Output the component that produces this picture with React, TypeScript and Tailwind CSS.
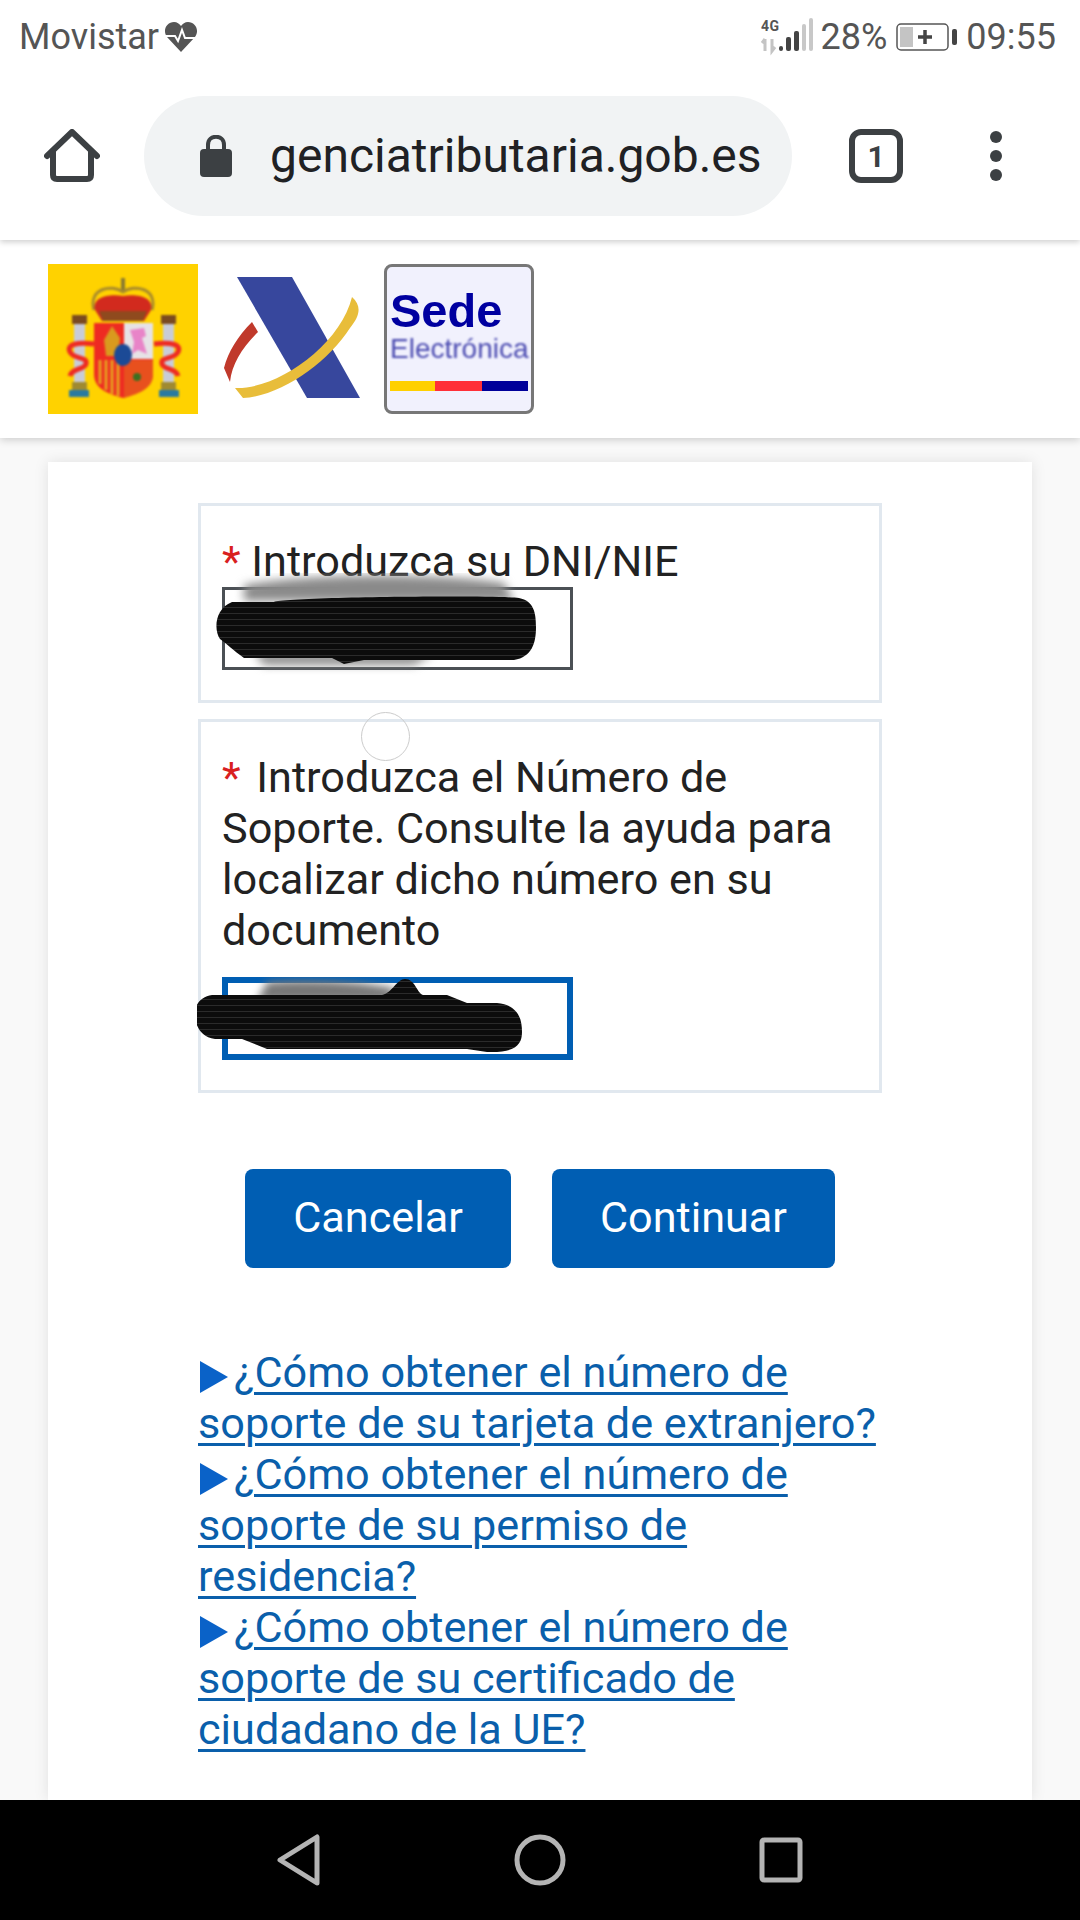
const links = [
  "¿Cómo obtener el número de soporte de su tarjeta de extranjero?",
  "¿Cómo obtener el número de soporte de su permiso de residencia?",
  "¿Cómo obtener el número de soporte de su certificado de ciudadano de la UE?",
];

function StatusBar() {
  return (
    <div className="relative z-30 flex h-[72px] items-center justify-between bg-white pl-[19px] pr-[24px] pt-[2px] text-[36px] text-[#555555]">
      <div className="flex items-center gap-[5px]">
        <span>Movistar</span>
        <svg width="34" height="32" viewBox="0 0 34 32">
          <path d="M17 31 L3 16 C-2 9 3 1 10 1 C13 1 15.500 3 17 5 C18.500 3 21 1 24 1 C31 1 36 9 31 16 Z" fill="#555555" />
          <path d="M1 15 H11 L14 20 L18 9 L21 17 H33" fill="none" stroke="#ffffff" strokeWidth="2" />
        </svg>
      </div>
      <div className="flex items-center">
        <svg width="56" height="40" viewBox="0 0 56 40" className="mr-[6px]">
          <text x="2" y="14" fontFamily="Roboto, sans-serif" fontWeight="700" fontSize="14" fill="#555555" textLength="18">4G</text>
          <path d="M6 22 V34 M3 26 L6 22 M13 22 V34 L16 30" fill="none" stroke="#c4c4c4" strokeWidth="3" />
          <rect x="20" y="29" width="4" height="5" rx="2" fill="#444444" />
          <rect x="27" y="20" width="5" height="14" rx="2" fill="#444444" />
          <rect x="35" y="14" width="5" height="20" rx="2" fill="#444444" />
          <rect x="43" y="7" width="4" height="27" rx="2" fill="#c8c8c8" />
          <rect x="50" y="1" width="4" height="33" rx="2" fill="#c8c8c8" />
        </svg>
        <span>28%</span>
        <svg width="62" height="28" viewBox="0 0 62 28" className="ml-[9px]">
          <rect x="1" y="1" width="51" height="26" rx="4" fill="none" stroke="#555555" strokeWidth="1.500" />
          <rect x="4" y="4" width="13" height="20" fill="#c4c4c4" />
          <path d="M22 14 H36 M29 7 V21" stroke="#444444" strokeWidth="3.500" />
          <rect x="56" y="6" width="5" height="16" rx="2" fill="#444444" />
        </svg>
        <span className="ml-[8px]">09:55</span>
      </div>
    </div>
  );
}

function Toolbar() {
  return (
    <div className="relative z-20 flex h-[168px] items-center bg-white pl-[44px] shadow-[0_2px_6px_rgba(0,0,0,0.2)]">
      <svg width="56" height="54" viewBox="0 0 56 54" fill="none" stroke="#3c4043" strokeWidth="6" strokeLinecap="round" strokeLinejoin="round">
        <path d="M3 27 L28 3 L53 27" />
        <path d="M9 22 V46 Q9 50 13 50 H43 Q47 50 47 46 V22" />
      </svg>
      <div className="ml-[44px] flex h-[120px] w-[648px] items-center overflow-hidden rounded-full bg-[#f1f3f4] pl-[56px]">
        <svg width="32" height="42" viewBox="0 0 32 42" className="shrink-0">
          <path d="M8 16 V10 C8 -1 24 -1 24 10 V16" fill="none" stroke="#3c4043" strokeWidth="4" />
          <rect x="0" y="14" width="32" height="28" rx="4" fill="#3c4043" />
        </svg>
        <span className="ml-[38px] text-[48px] whitespace-nowrap text-[#202124]">genciatributaria.gob.es</span>
      </div>
      <div className="ml-[57px] flex h-[54px] w-[54px] items-center justify-center rounded-[12px] border-[6px] border-[#3c4043] text-[30px] font-bold text-[#3c4043]">
        1
      </div>
      <div className="ml-[87px] flex flex-col gap-[7px]">
        <div className="h-[12px] w-[12px] rounded-full bg-[#3c4043]" />
        <div className="h-[12px] w-[12px] rounded-full bg-[#3c4043]" />
        <div className="h-[12px] w-[12px] rounded-full bg-[#3c4043]" />
      </div>
    </div>
  );
}

function Crest() {
  return (
    <svg width="150" height="150" viewBox="0 0 150 150" className="bg-[#ffd200]">
      <g className="blur-[1px]">
        <path d="M75 14 V32" stroke="#8a7a30" strokeWidth="4" />
        <path d="M46 46 C40 24 64 20 75 28 C86 20 110 24 104 46" fill="#ffd200" stroke="#a88a2c" strokeWidth="3" />
        <path d="M47 46 C44 32 62 30 75 32 C88 30 106 32 103 46 L96 57 H54 Z" fill="#d22a1e" />
        <path d="M51 47 H99 L95 57 H55 Z" fill="#8f4a1e" />
        <path d="M46 59 H105 V110 C105 126 88 130 75 134 C62 130 46 126 46 110 Z" fill="#ee2b22" />
        <rect x="76" y="59" width="29" height="36" fill="#e6e2e6" />
        <path d="M82 66 L96 64 L98 72 L94 74 L99 90 L90 86 L84 90 L86 78 Z" fill="#e884c8" />
        <path d="M64 62 L72 74 L70 92 L58 92 L56 76 Z" fill="#d99a1e" />
        <path d="M52 96 V120 M58 96 V126 M64 96 V130 M70 96 V132" stroke="#e8a020" strokeWidth="3" />
        <path d="M76 96 H105 V110 C105 126 88 130 76 134 Z" fill="#e8501e" />
        <circle cx="89" cy="113" r="4" fill="#3c7020" />
        <ellipse cx="75" cy="91" rx="9" ry="11" fill="#1c4a96" />
        <rect x="26" y="58" width="11" height="60" fill="#c8ccd8" />
        <rect x="115" y="58" width="11" height="60" fill="#c8ccd8" />
        <path d="M24 51 H39 V60 H24 Z M113 51 H128 V60 H113 Z" fill="#7a4a20" />
        <path d="M24 118 H39 V126 H24 Z M113 118 H128 V126 H113 Z" fill="#a08a30" />
        <path d="M21 126 H41 V133 H21 Z M111 126 H131 V133 H111 Z" fill="#2a7aa0" />
        <path d="M46 80 C30 78 18 80 22 88 C26 96 40 92 38 100 C36 106 24 104 22 112" fill="none" stroke="#ee2b22" strokeWidth="5" />
        <path d="M106 80 C122 78 134 80 130 88 C126 96 112 92 114 100 C116 106 128 104 130 112" fill="none" stroke="#ee2b22" strokeWidth="5" />
      </g>
    </svg>
  );
}

function AeatLogo() {
  return (
    <svg width="150" height="150" viewBox="0 0 150 150" className="mx-[18px]">
      <path d="M21 13 L76 13 L144 134 L91 134 Z" fill="#37479d" />
      <path d="M36 58 L42 68 C26 84 16 100 14 118 L8 104 C12 88 22 72 36 58 Z" fill="#c0392b" />
      <path d="M136 33 C146 42 144 52 134 64 C112 98 66 132 27 134 L19 124 C60 126 124 82 136 33 Z" fill="#e8bd3a" />
    </svg>
  );
}

function SedeLogo() {
  return (
    <div className="flex h-[150px] w-[150px] flex-col rounded-[8px] border-[3px] border-[#777777] bg-[#f1f1fd] pl-[3px] pt-[21px] [font-family:'Liberation_Sans',sans-serif]">
      <span className="text-[47px] leading-[46px] font-bold text-[#0000a0] blur-[0.7px]">Sede</span>
      <span className="mt-[1px] whitespace-nowrap text-[28px] leading-[28px] text-[#4a4ab0] blur-[0.8px]">Electrónica</span>
      <div className="mt-[18px] flex h-[10px] w-[138px]">
        <div className="w-[45px] bg-[#ffd000]" />
        <div className="w-[47px] bg-[#ff3038]" />
        <div className="w-[46px] bg-[#00009a]" />
      </div>
    </div>
  );
}

function Field({ first, children, focused }: { first?: boolean; children: React.ReactNode; focused?: boolean }) {
  return (
    <div className="relative border-[3px] border-[#e1e8ef] bg-white px-[21px] pb-[30px] pt-[30px]">
      <div className="text-[43.200px] leading-[51px] text-[#222222]">{children}</div>
      <div className={`relative h-[83px] w-[351px] ${first ? "" : "mt-[21px]"}`}>
        <input
          readOnly
          className={
            focused
              ? "h-full w-full border-[6px] border-[#005eb3] bg-white"
              : "h-full w-full border-[3px] border-[#4b5055] bg-white"
          }
        />
        {first ? <ScribbleOne /> : <ScribbleTwo />}
      </div>
    </div>
  );
}

function ScribbleOne() {
  return (
    <svg width="340" height="110" viewBox="0 0 340 110" className="absolute left-[-8px] top-[-14px]">
      <defs>
        <pattern id="ink1" width="4" height="6" patternUnits="userSpaceOnUse">
          <rect width="4" height="6" fill="#0c0c0c" />
          <rect y="4" width="4" height="1" fill="#2b2b2b" />
        </pattern>
      </defs>
      <path d="M30 12 C100 0 220 0 290 10 L300 28 H30 Z" fill="#8a8a8a" className="blur-[5px]" />
      <path d="M40 80 H220 L200 92 H50 Z" fill="#8a8a8a" className="blur-[5px]" />
      <path
        d="M18 29 H60 C70 24 280 22 305 25 C320 28 322 40 322 54 C322 70 318 84 300 87 H150 L130 91 L118 85 H30 C20 78 12 70 6 66 C0 58 0 36 18 29 Z"
        fill="url(#ink1)"
      />
    </svg>
  );
}

function ScribbleTwo() {
  return (
    <svg width="340" height="90" viewBox="0 0 340 90" className="absolute left-[-25px] top-[0px]">
      <defs>
        <pattern id="ink2" width="4" height="6" patternUnits="userSpaceOnUse">
          <rect width="4" height="6" fill="#0c0c0c" />
          <rect y="4" width="4" height="1" fill="#2b2b2b" />
        </pattern>
      </defs>
      <path d="M70 5 C110 2 170 4 200 12 L190 24 H60 Z" fill="#777777" className="blur-[4px]" />
      <path
        d="M15 18 H185 C195 16 200 2 208 2 C218 2 220 16 226 18 H250 L270 26 H300 C320 28 325 40 325 55 C325 68 318 76 290 75 L270 72 H70 L45 62 H18 C2 60 -2 46 -2 38 C-2 26 4 20 15 18 Z"
        fill="url(#ink2)"
      />
    </svg>
  );
}

function NavBar() {
  return (
    <div className="flex h-[120px] items-center justify-center bg-black">
      <svg width="44" height="52" viewBox="0 0 44 52" fill="none" stroke="#b4b4b4" strokeWidth="5" strokeLinejoin="round" className="mr-[193px]">
        <path d="M40 3 V49 L3 26 Z" />
      </svg>
      <svg width="52" height="52" viewBox="0 0 52 52" fill="none" stroke="#b4b4b4" strokeWidth="5" className="mr-[193px]">
        <circle cx="26" cy="26" r="23" />
      </svg>
      <svg width="44" height="46" viewBox="0 0 44 46" fill="none" stroke="#b4b4b4" strokeWidth="5" strokeLinejoin="round">
        <rect x="3" y="3" width="38" height="40" rx="2" />
      </svg>
    </div>
  );
}

export default function App() {
  return (
    <div className="flex h-[1920px] w-[1080px] flex-col overflow-hidden bg-[#f9f9f9] [font-family:Roboto,sans-serif]">
      <StatusBar />
      <Toolbar />
      <div className="relative z-10 flex h-[198px] items-center bg-white pl-[48px] shadow-[0_2px_8px_rgba(0,0,0,0.18)]">
        <Crest />
        <AeatLogo />
        <SedeLogo />
      </div>
      <div className="mx-[48px] mt-[24px] min-h-0 flex-1 bg-white pl-[150px] pr-[150px] pt-[41px] shadow-[0_0_14px_rgba(0,0,0,0.1)]">
        <div className="flex flex-col gap-[16px]">
          <Field first>
            <span className="text-[#d9201f]">*</span> Introduzca su DNI/NIE
          </Field>
          <div className="relative">
            <Field focused>
              <span className="mr-[5px] text-[#d9201f]">*</span> Introduzca el Número de Soporte. Consulte la ayuda para localizar dicho número en su documento
            </Field>
            <div className="absolute left-[163px] top-[-7px] h-[49px] w-[49px] rounded-full border border-[#cccccc]" />
          </div>
        </div>
        <div className="ml-[47px] mt-[76px] flex gap-[41px] text-[43.200px] text-white">
          <button className="h-[99px] w-[266px] rounded-[8px] bg-[#005eb3]">Cancelar</button>
          <button className="h-[99px] w-[283px] rounded-[8px] bg-[#005eb3]">Continuar</button>
        </div>
        <div className="mt-[79px] text-[43.200px] leading-[51px] text-[#0a5fab]">
          {links.map((text) => (
            <div key={text}>
              <svg width="30" height="32" viewBox="0 0 30 32" className="mr-[6px] inline-block align-[-6px] blur-[0.6px]">
                <path d="M2 0 L30 16 L2 32 Z" fill="#0a62c8" />
              </svg>
              <a href="#" className="underline decoration-[3px] underline-offset-[5px]">{text}</a>
            </div>
          ))}
        </div>
      </div>
      <NavBar />
    </div>
  );
}
